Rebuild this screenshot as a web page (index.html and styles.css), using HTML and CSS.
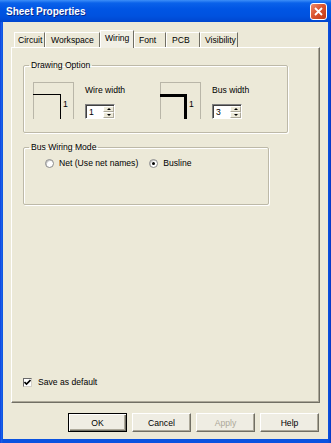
FILE: index.html
```html
<!DOCTYPE html>
<html lang="en">
<head>
    <meta charset="UTF-8">
    <title>Sheet Properties</title>
    <link rel="stylesheet" href="styles.css">
</head>
<body>

    <div class="window">
        <div class="titlebar">
            <span class="title">Sheet Properties</span>
            <span class="close">
                <svg width="9" height="9" viewBox="0 0 9 9"><path d="M1 1 L8 8 M8 1 L1 8" stroke="#fff" stroke-width="1.8" fill="none"/></svg>
            </span>
        </div>

        <div class="client">
            <div class="tabs">
                <div class="tab tab-circuit">Circuit</div>
                <div class="tab tab-workspace">Workspace</div>
                <div class="tab tab-wiring active">Wiring</div>
                <div class="tab tab-font">Font</div>
                <div class="tab tab-pcb">PCB</div>
                <div class="tab tab-visibility">Visibility</div>
            </div>

            <div class="panel">
                <fieldset class="group drawing">
                    <legend>Drawing Option</legend>
                    <div class="options">
                        <div class="option">
                            <div class="preview">
                                <div class="wire"></div>
                                <span class="num">1</span>
                            </div>
                            <div class="field">
                                <label>Wire width</label>
                                <div class="spin">
                                    <span class="val">1</span>
                                    <span class="arrows"><span class="up"></span><span class="down"></span></span>
                                </div>
                            </div>
                        </div>
                        <div class="option">
                            <div class="preview">
                                <div class="wire bus"></div>
                                <span class="num">1</span>
                            </div>
                            <div class="field">
                                <label>Bus width</label>
                                <div class="spin">
                                    <span class="val">3</span>
                                    <span class="arrows"><span class="up"></span><span class="down"></span></span>
                                </div>
                            </div>
                        </div>
                    </div>
                </fieldset>

                <fieldset class="group mode">
                    <legend>Bus Wiring Mode</legend>
                    <div class="radios">
                        <label class="radio"><span class="dot"></span>Net (Use net names)</label>
                        <label class="radio"><span class="dot checked"></span>Busline</label>
                    </div>
                </fieldset>

                <div class="spacer"></div>

                <label class="check">
                    <span class="box">
                        <svg width="7" height="7" viewBox="0 0 7 7"><path d="M0.5 3 L2.5 5 L6.5 1" stroke="#000" stroke-width="1.6" fill="none"/></svg>
                    </span>
                    Save as default
                </label>
            </div>

            <div class="buttons">
                <button class="btn default">OK</button>
                <button class="btn">Cancel</button>
                <button class="btn disabled">Apply</button>
                <button class="btn">Help</button>
            </div>
        </div>
    </div>

</body>
</html>
```

FILE: styles.css
```css
* {
    margin: 0;
    padding: 0;
    box-sizing: border-box;
}

body {
    font-family: 'Liberation Sans', Arial, sans-serif;
    font-size: 8.6px;
    color: #000;
    background-color: #0a4fdc;
}

.window {
    width: 331px;
    height: 443px;
    display: flex;
    flex-direction: column;
    background: linear-gradient(to right, #0831d9 0, #1c63ea 1px, #0a52e0 3px, #0a52e0 328px, #0a45d0 330px, #0831c0 331px);
}

/* title bar */
.titlebar {
    height: 22px;
    display: flex;
    align-items: center;
    justify-content: space-between;
    padding: 0 4px 0 6px;
    background: linear-gradient(to bottom, #3d8ff8 0, #0a62ea 3px, #0055e4 9px, #0052df 16px, #0046cf 22px);
}

.title {
    color: #fff;
    font-weight: bold;
    font-size: 10px;
    text-shadow: 1px 1px 0 #0a2a8a;
}

.close {
    width: 17px;
    height: 17px;
    border: 1px solid #fff;
    border-radius: 3px;
    background: linear-gradient(135deg, #ee8b6a 0, #db5530 45%, #c23a16 100%);
    display: flex;
    align-items: center;
    justify-content: center;
}

/* dialog body */
.client {
    flex: 1;
    margin: 0 3px 4px;
    background-color: #ece9d8;
    padding: 8px 8px 7px;
    display: flex;
    flex-direction: column;
}

.tabs {
    display: flex;
    height: 17px;
    padding-left: 3px;
    position: relative;
    z-index: 1;
}

.tab {
    height: 15px;
    margin-top: 2px;
    padding-left: 4px;
    line-height: 14px;
    border-top: 1px solid #fff;
    border-left: 1px solid #fff;
    border-right: 1px solid #716f64;
    white-space: nowrap;
}

.tab-circuit { width: 31px; padding-left: 3px; }
.tab-workspace { width: 55px; padding-left: 5px; }
.tab-wiring { width: 34px; }
.tab-font { width: 32px; padding-left: 4px; }
.tab-pcb { width: 34px; padding-left: 5px; }
.tab-visibility { width: 38px; padding-left: 4px; }

.tab.active {
    height: 18px;
    margin-top: 0;
    line-height: 14px;
    background-color: #f1efe5;
    border-bottom: none;
}

.panel {
    height: 356px;
    width: 309px;
    border-top: 1px solid #fff;
    border-left: 1px solid #fff;
    border-right: 1px solid #716f64;
    border-bottom: 1px solid #716f64;
    box-shadow: inset -1px -1px 0 #aca899;
    padding: 0 0 14px 11px;
    display: flex;
    flex-direction: column;
}

/* group boxes */
.group {
    width: 246px;
    border: 1px solid #bdb9a8;
    box-shadow: inset 1px 1px 0 #fff, 1px 1px 0 #fff;
    border-radius: 2px;
    padding: 0 0 0 9px;
}

.group legend {
    margin-left: -4px;
    padding: 0 2px;
    line-height: 10px;
}

.drawing {
    margin-top: 12px;
    height: 73px;
}

.options {
    display: flex;
    margin-top: 12px;
}

.option {
    display: flex;
    width: 127px;
    gap: 11px;
}

.preview {
    width: 41px;
    height: 37px;
    border: 1px solid #b9b6a8;
    border-bottom: none;
    padding-top: 11px;
    display: flex;
    align-items: flex-start;
}

.wire {
    width: 28px;
    height: 100%;
    margin-left: -1px;
    border-top: 1px solid #000;
    border-right: 1px solid #000;
}

.wire.bus {
    width: 27px;
    border-top-width: 3px;
    border-right-width: 3px;
}

.num {
    margin: 5px 0 0 2px;
    line-height: 10px;
}

.field {
    padding-top: 3px;
}

.field label {
    display: block;
    line-height: 11px;
}

.spin {
    margin-top: 8px;
    width: 30px;
    height: 15px;
    display: flex;
    background-color: #fff;
    border: 1px solid;
    border-color: #808080 #fff #fff #808080;
    box-shadow: inset 1px 1px 0 #404040;
}

.spin .val {
    flex: 1;
    padding: 1px 0 0 3px;
    line-height: 12px;
}

.arrows {
    width: 11px;
    display: flex;
    flex-direction: column;
    padding: 1px 0 0 0;
}

.arrows span {
    flex: 1;
    background-color: #ece9d8;
    border: 1px solid;
    border-color: #fff #aca899 #aca899 #fff;
    display: flex;
    align-items: center;
    justify-content: center;
}

.arrows .up::after,
.arrows .down::after {
    content: "";
    border-left: 2px solid transparent;
    border-right: 2px solid transparent;
}

.arrows .up::after {
    border-bottom: 2px solid #000;
}

.arrows .down::after {
    border-top: 2px solid #000;
}

.mode {
    margin-top: 9px;
    height: 63px;
}

.radios {
    display: flex;
    gap: 11px;
    margin-top: 6px;
    padding-left: 12px;
    line-height: 11px;
}

.radio {
    display: flex;
    align-items: center;
    gap: 5px;
}

.dot {
    width: 9px;
    height: 9px;
    border-radius: 50%;
    background-color: #fff;
    border: 1px solid #8a8a8a;
    box-shadow: inset 1px 1px 0 #c8c8c8;
    display: flex;
    align-items: center;
    justify-content: center;
}

.dot.checked::after {
    content: "";
    width: 3px;
    height: 3px;
    border-radius: 50%;
    background-color: #000;
}

.spacer {
    flex: 1;
}

.check {
    display: flex;
    align-items: center;
    gap: 6px;
    line-height: 11px;
}

.check .box {
    width: 9px;
    height: 9px;
    background-color: #fff;
    border: 1px solid;
    border-color: #6a6a6a #d4d0c8 #d4d0c8 #6a6a6a;
    display: flex;
    align-items: center;
    justify-content: center;
}

/* bottom buttons */
.buttons {
    display: flex;
    justify-content: flex-end;
    gap: 5px;
    margin-top: 10px;
    padding-right: 1px;
}

.btn {
    width: 59px;
    height: 19px;
    font-family: inherit;
    font-size: 8.6px;
    color: #000;
    background-color: #efede3;
    border: 1px solid;
    border-color: #fff #716f64 #716f64 #fff;
    box-shadow: inset -1px -1px 0 #aca899;
}

.btn.default {
    border-color: #000;
    box-shadow: inset 1px 1px 0 #fff, inset -1px -1px 0 #716f64, inset -2px -2px 0 #aca899;
}

.btn.disabled {
    color: #aca899;
}
```
